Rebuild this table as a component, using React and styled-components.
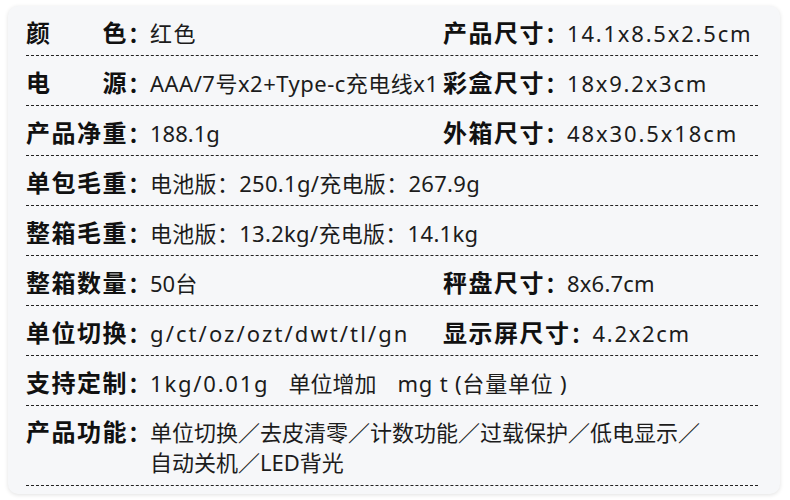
import styled, { createGlobalStyle } from 'styled-components';

const GlobalStyle = createGlobalStyle`
  body {
    margin: 0;
    background: #ffffff;
    font-family: "Noto Sans CJK SC", "Noto Sans", sans-serif;
    color: #151515;
  }
`;

// [label, value, letter-spacing of the value]
const specs = [
  { left: ['颜色', '红色', 1.5], right: ['产品尺寸', '14.1x8.5x2.5cm', 1.8] },
  { left: ['电源', 'AAA/7号x2+Type-c充电线x1', 0.5], right: ['彩盒尺寸', '18x9.2x3cm', 1.8] },
  { left: ['产品净重', '188.1g', 0], right: ['外箱尺寸', '48x30.5x18cm', 1.9] },
  { left: ['单包毛重', '电池版：250.1g/充电版：267.9g', 0.3] },
  { left: ['整箱毛重', '电池版：13.2kg/充电版：14.1kg', 0.3] },
  { left: ['整箱数量', '50台', 0], right: ['秤盘尺寸', '8x6.7cm', 0.2] },
  { left: ['单位切换', 'g/ct/oz/ozt/dwt/tl/gn', 2.1], right: ['显示屏尺寸', '4.2x2cm', 1.7] },
];

export default function App() {
  return (
    <>
      <GlobalStyle />
      <Card>
        {specs.map((row, i) => (
          <Row key={i}>
            <Cell $fixed={!!row.right}>
              <Label>{row.left[0]}</Label>
              <Colon>：</Colon>
              <Value $ls={row.left[2]}>{row.left[1]}</Value>
            </Cell>
            {row.right && (
              <Cell>
                <Label>{row.right[0]}</Label>
                <Colon>：</Colon>
                <Value $ls={row.right[2]}>{row.right[1]}</Value>
              </Cell>
            )}
          </Row>
        ))}
        <Row>
          <Cell>
            <Label>支持定制</Label>
            <Colon>：</Colon>
            <Value $ls={1.8}>1kg/0.01g</Value>
            <Value $ls={0} $gap={19}>单位增加</Value>
            <Value $ls={0.8} $gap={21}>mg t (台量单位 )</Value>
          </Cell>
        </Row>
        <Row $tall>
          <Cell>
            <Label>产品功能</Label>
            <Colon>：</Colon>
            <Value $wrap>单位切换／去皮清零／计数功能／过载保护／低电显示／自动关机／LED背光</Value>
          </Cell>
        </Row>
      </Card>
    </>
  );
}

const Card = styled.div`
  margin: 6px 10px 7px 8px;
  padding: 0 22px 8px 18px;
  background: #f6f7f9;
  border-radius: 10px;
  box-shadow: 0 1px 4px rgba(0, 0, 0, 0.12);
`;

const Row = styled.div`
  display: flex;
  align-items: ${p => (p.$tall ? 'flex-start' : 'center')};
  height: ${p => (p.$tall ? '80px' : '50px')};
  padding-top: ${p => (p.$tall ? '7px' : '1px')};
  box-sizing: border-box;
  border-bottom: 1px dashed #222;
`;

const Cell = styled.div`
  display: flex;
  align-items: baseline;
  flex: ${p => (p.$fixed ? '0 0 417px' : '1 1 auto')};
  min-width: 0;
`;

const Label = styled.span`
  display: inline-block;
  min-width: 102px;
  font-size: 24px;
  font-weight: 700;
  letter-spacing: 1.5px;
  text-align-last: justify;
  color: #111;
  white-space: nowrap;
`;

const Colon = styled.span`
  font-size: 22px;
  font-weight: 700;
  width: 22px;
  color: #111;
`;

const Value = styled.span`
  font-family: "Noto Sans", "Noto Sans CJK SC", sans-serif;
  font-size: 22px;
  line-height: 30px;
  color: #1c1c1c;
  letter-spacing: ${p => p.$ls || 0}px;
  margin-left: ${p => p.$gap || 0}px;
  white-space: ${p => (p.$wrap ? 'normal' : 'pre')};
  ${p => p.$wrap && 'max-width: 562px;'}
`;
